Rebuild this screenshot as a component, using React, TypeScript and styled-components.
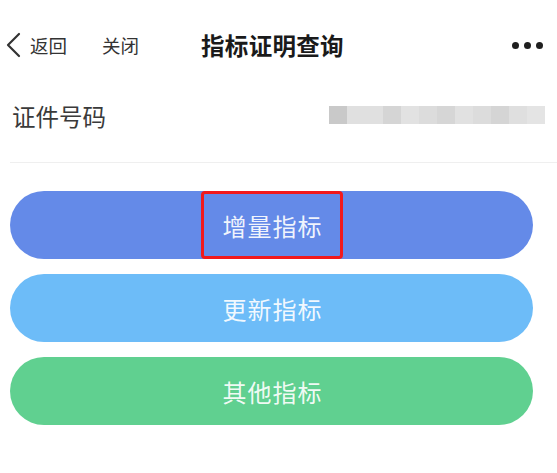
import React from "react";
import styled, { createGlobalStyle } from "styled-components";

const Global = createGlobalStyle`
  html, body { margin: 0; padding: 0; background: #ffffff; }
  body { font-family: "Noto Sans CJK SC", "Noto Sans", sans-serif; }
`;

const Page = styled.div`
  width: 557px;
  height: 473px;
  background: #fff;
  overflow: hidden;
`;

const NavBar = styled.div`
  height: 90px;
  display: flex;
  align-items: center;
  padding-left: 5px;
  padding-right: 14px;
  color: #222;
`;

const BackLink = styled.div`
  display: flex;
  align-items: center;
  gap: 8px;
  font-size: 18.5px;
  color: #333;
`;

const CloseLink = styled.div`
  margin-left: 35px;
  font-size: 18.5px;
  color: #333;
`;

const Title = styled.div`
  margin-left: 62px;
  font-size: 23.5px;
  font-weight: 700;
  color: #1a1a1a;
  letter-spacing: 0.3px;
`;

const More = styled.div`
  margin-left: auto;
  display: flex;
  gap: 5px;
`;

const Dot = styled.span`
  width: 7px;
  height: 7px;
  border-radius: 50%;
  background: #1f1f1f;
`;

const InfoRow = styled.div`
  margin-left: 10px;
  padding: 14px 12px 34px 2px;
  display: flex;
  align-items: flex-start;
  justify-content: space-between;
  border-bottom: 1px solid #efefef;
`;

const Label = styled.div`
  font-size: 23.5px;
  line-height: 24px;
  color: #3a3a3a;
`;

const Masked = styled.div`
  margin-top: 2px;
  display: flex;
`;

const Block = styled.span<{ $shade: string }>`
  width: 18px;
  height: 18px;
  background: ${(p) => p.$shade};
`;

const Actions = styled.div`
  margin: 28px 24px 0 10px;
  display: flex;
  flex-direction: column;
  gap: 15px;
`;

const ActionButton = styled.div<{ $bg: string }>`
  height: 68px;
  border-radius: 34px;
  background: ${(p) => p.$bg};
  display: flex;
  align-items: center;
  justify-content: center;
  font-size: 24px;
  color: rgba(255, 255, 255, 0.92);
  letter-spacing: 1px;
`;

const ButtonLabel = styled.span<{ $marked?: boolean }>`
  box-sizing: border-box;
  height: 100%;
  display: inline-flex;
  align-items: center;
  padding: 0 17px 0 19px;
  border: 3px solid ${(p) => (p.$marked ? "#f2191b" : "transparent")};
  border-radius: 4px;
`;

const shades = [
  "#c9c9c9", "#e0e0e0", "#e0e0e0", "#d5d5d5", "#e2e2e2", "#dcdcdc",
  "#d6d6d6", "#e1e1e1", "#dcdcdc", "#d5d5d5", "#dfdfdf", "#e4e4e4",
];

const buttons = [
  { text: "增量指标", bg: "#648ae8", marked: true },
  { text: "更新指标", bg: "#6dbcf8", marked: false },
  { text: "其他指标", bg: "#60d090", marked: false },
];

export default function App() {
  return (
    <Page>
      <Global />
      <NavBar>
        <BackLink>
          <svg width="17" height="26" viewBox="0 0 17 26" fill="none">
            <path d="M14 2 L3 13 L14 24" stroke="#333" strokeWidth="2.2" strokeLinecap="round" strokeLinejoin="round" />
          </svg>
          <span>返回</span>
        </BackLink>
        <CloseLink>关闭</CloseLink>
        <Title>指标证明查询</Title>
        <More>
          <Dot />
          <Dot />
          <Dot />
        </More>
      </NavBar>
      <InfoRow>
        <Label>证件号码</Label>
        <Masked>
          {shades.map((s, i) => (
            <Block key={i} $shade={s} />
          ))}
        </Masked>
      </InfoRow>
      <Actions>
        {buttons.map((b) => (
          <ActionButton key={b.text} $bg={b.bg}>
            <ButtonLabel $marked={b.marked}>{b.text}</ButtonLabel>
          </ActionButton>
        ))}
      </Actions>
    </Page>
  );
}
